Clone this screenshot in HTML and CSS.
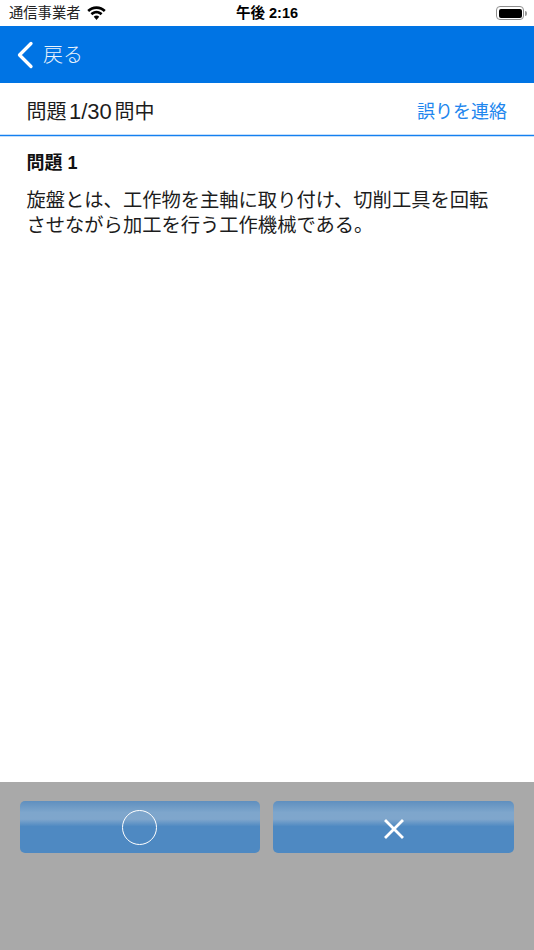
FILE: index.html
```html
<!DOCTYPE html>
<html lang="ja">
<head>
<meta charset="utf-8">
<title>問題</title>
<link rel="stylesheet" href="styles.css">
</head>
<body>
<div class="screen">
  <div class="status">
    <div class="status-left">
      <span class="carrier">通信事業者</span>
      <svg class="wifi" width="19" height="14" viewBox="1 0 18 13.400"><path d="M10 2.900c2.700 0 5.200 1 7.100 2.800l1.700-1.800C16.500 1.600 13.400.2 10 .2S3.500 1.600 1.200 3.900l1.700 1.800C4.800 3.900 7.300 2.900 10 2.900z"/><path d="M10 7.200c1.500 0 2.900.6 4 1.600l1.700-1.800C14.200 5.500 12.200 4.600 10 4.600s-4.200.9-5.700 2.400L6 8.800c1.100-1 2.500-1.600 4-1.600z"/><path d="M10 9.100c-1 0-1.900.4-2.600 1.100l2.600 3.100 2.600-3.100c-.7-.7-1.600-1.100-2.600-1.100z"/></svg>
    </div>
    <span class="time">午後 2:16</span>
    <div class="battery"><div class="battery-body"><div class="battery-fill"></div></div><div class="battery-cap"></div></div>
  </div>
  <header class="nav">
    <svg class="chevron" width="18" height="28" viewBox="0 0 18 28"><path d="M15 2.500 3.500 14 15 25.500" fill="none" stroke="#fff" stroke-width="3.300" stroke-linecap="round" stroke-linejoin="round"/></svg>
    <span class="back">戻る</span>
  </header>
  <div class="subhead">
    <span class="count">問題<span class="num">1/30</span>問中</span>
    <span class="report">誤りを連絡</span>
  </div>
  <main class="content">
    <h1 class="q-title">問題 1</h1>
    <p class="q-text">旋盤とは、工作物を主軸に取り付け、切削工具を回転させながら加工を行う工作機械である。</p>
  </main>
  <footer class="answers">
    <button class="answer"><span class="circle"></span></button>
    <button class="answer"><svg class="cross" width="20" height="20" viewBox="0 0 20 20"><path d="M2 2 18 18M18 2 2 18" stroke="#fff" stroke-width="2.800" stroke-linecap="square"/></svg></button>
  </footer>
</div>
</body>
</html>
```
FILE: styles.css
```css
* { box-sizing: border-box; }
html, body { margin: 0; padding: 0; }
body {
  font-family: "Liberation Sans", "Noto Sans CJK JP", sans-serif;
  background: #fff;
  color: #111;
}
.screen {
  width: 534px;
  height: 950px;
  display: flex;
  flex-direction: column;
  overflow: hidden;
}
.status {
  height: 26px;
  flex: none;
  display: flex;
  align-items: center;
  justify-content: space-between;
  padding: 0 7px 0 9px;
  position: relative;
}
.status-left { display: flex; align-items: center; gap: 7px; }
.carrier { font-size: 14.3px; color: #222; line-height: 26px; }
.wifi { display: block; }
.time {
  position: absolute;
  left: 0;
  right: 0;
  text-align: center;
  font-size: 14.5px;
  font-weight: 700;
  line-height: 26px;
  color: #000;
}
.battery { display: flex; align-items: center; }
.battery-body {
  width: 28px;
  height: 14px;
  border: 1px solid #8e8e8e;
  border-radius: 4px;
  padding: 1.500px;
}
.battery-fill { height: 100%; background: #000; border-radius: 2px; }
.battery-cap { width: 2px; height: 5px; margin-left: 1px; background: #9a9a9a; border-radius: 0 2px 2px 0; }
.nav {
  height: 57px;
  flex: none;
  background: #0074e4;
  display: flex;
  align-items: center;
  padding-left: 16px;
  gap: 9px;
}
.chevron { display: block; }
.back { color: #fff; font-size: 20px; font-weight: 300; opacity: .92; position: relative; top: -1px; }
.subhead {
  height: 53px;
  flex: none;
  display: flex;
  align-items: center;
  justify-content: space-between;
  padding: 2px 27px 0 26.500px;
  border-bottom: 1px solid #1480f0;
  box-shadow: 0 1px 0 #c5dffa, inset 0 -1px 0 #c5dffa;
}
.count { font-size: 20px; color: #1c1c1c; }
.num { font-size: 22px; margin: 0 2.700px 0 2.500px; }
.report { font-size: 18px; color: #2186ee; }
.content { flex: 1; padding: 15px 27px 0 26.500px; }
.q-title { margin: 0; font-size: 18px; font-weight: 700; line-height: 24px; color: #111; }
.q-text { margin: 13px 0 0; font-size: 19.300px; line-height: 25px; color: #1c1c1c; width: 475px; }
.answers {
  height: 168px;
  flex: none;
  background: #a9a9a9;
  display: grid;
  grid-template-columns: 240px 241px;
  gap: 13px;
  padding: 19px 20px 0 20px;
  align-items: start;
}
.answer {
  height: 52px;
  border: 0;
  border-radius: 5px;
  padding: 0;
  display: flex;
  align-items: center;
  justify-content: center;
  background: linear-gradient(to bottom, #5f8fbf 0, #7ea6cc 22%, #7fa6cc 35%, #4e89c2 49%, #4e89c2 100%);
}
.circle {
  width: 35px;
  height: 35px;
  margin-left: -1px;
  border: 1.750px solid #fff;
  border-radius: 50%;
  display: block;
}
.cross { display: block; margin-top: 3px; }
```
